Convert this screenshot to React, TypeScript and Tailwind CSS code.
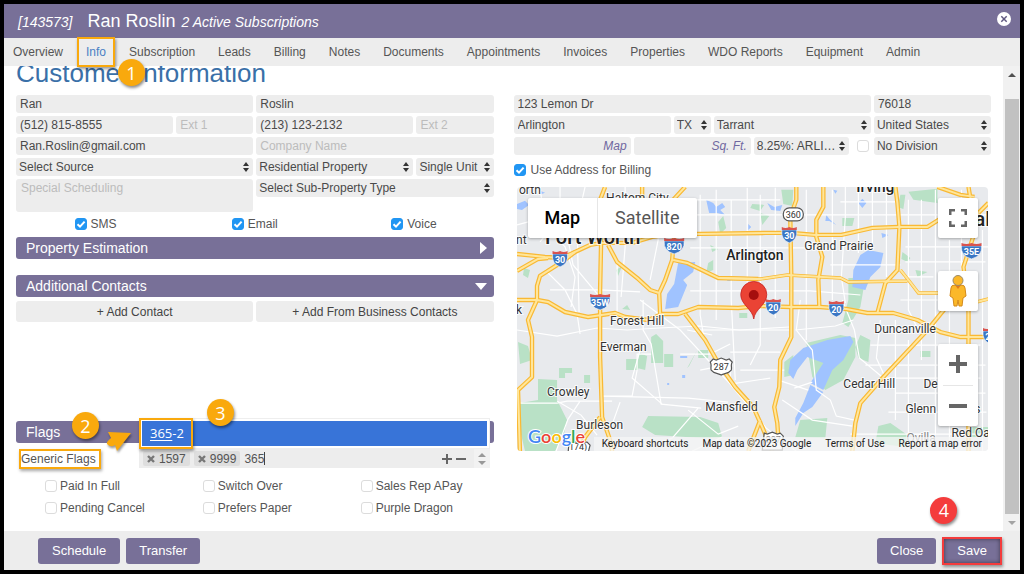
import type { ReactNode } from "react";
import clsx from "clsx";

const tabs = [
  "Overview", "Info", "Subscription", "Leads", "Billing", "Notes", "Documents",
  "Appointments", "Invoices", "Properties", "WDO Reports", "Equipment", "Admin",
];

const flags = ["Paid In Full", "Switch Over", "Sales Rep APay", "Pending Cancel", "Prefers Paper", "Purple Dragon"];

function Field({ label, value, className, unit }: { label: string; value?: string; className?: string; unit?: boolean }) {
  return (
    <input
      aria-label={label}
      placeholder={label}
      defaultValue={value}
      className={clsx(
        "h-[18px] w-full min-w-0 rounded-[3px] bg-[#ededed] px-1 text-xs text-[#4a4a4a]",
        unit ? "text-right italic placeholder:text-[#7068a0]" : "placeholder:text-[#bcbcbc]",
        className
      )}
    />
  );
}

function Picker({ label, value, className }: { label: string; value: string; className?: string }) {
  return (
    <div className={clsx("relative", className)}>
      <select aria-label={label} className="block h-[18px] w-full appearance-none truncate rounded-[3px] bg-[#ededed] pl-[3px] pr-3 text-xs text-[#4a4a4a]">
        <option>{value}</option>
      </select>
      <svg viewBox="0 0 6 10" className="pointer-events-none absolute right-1 top-1 h-[10px] w-[6px]" fill="#333">
        <path d="M3 0 6 4H0zM0 6h6L3 10z" />
      </svg>
    </div>
  );
}

function Tick({ checked, label }: { checked?: boolean; label?: string }) {
  return (
    <span className="relative block size-3 shrink-0">
      <input
        type="checkbox"
        defaultChecked={checked}
        aria-label={label}
        className="peer block size-3 appearance-none rounded-[3px] border border-[#dcdcdc] bg-white checked:border-[#2196f3] checked:bg-[#2196f3]"
      />
      <svg viewBox="0 0 12 12" className="pointer-events-none absolute inset-0 hidden size-3 peer-checked:block" fill="none" stroke="#fff" strokeWidth="2">
        <path d="M2.5 6.2 5 8.6l4.6-5" />
      </svg>
    </span>
  );
}

function Bar({ title, children }: { title: string; children?: ReactNode }) {
  return (
    <h2 className="flex h-[22px] items-center justify-between rounded-[3px] bg-[#787098] pl-[10px] pr-[7px] text-sm text-white">
      {title}
      {children}
    </h2>
  );
}

function Callout({ n, className }: { n: number; className?: string }) {
  return (
    <span
      className={clsx(
        "absolute z-20 flex size-[27px] items-center justify-center rounded-full font-['Open_Sans',sans-serif] text-lg text-white shadow-[1px_2px_3px_rgba(0,0,0,0.45)]",
        className
      )}
    >
      {n}
    </span>
  );
}

function Interstate({ x, y, n }: { x: number; y: number; n: string }) {
  const w = n.length > 2 ? 20 : 15;
  return (
    <g transform={`translate(${x} ${y})`}>
      <path d={`M${-w / 2} -4Q${-w / 2 - 1} 6 0 9Q${w / 2 + 1} 6 ${w / 2} -4z`} fill="#3a76c4" stroke="#fff" strokeWidth="0.6" />
      <path d={`M${-w / 2} -7q${w / 4} 2 ${w / 2} 0q${w / 4} 2 ${w / 2} 0v3h${-w}z`} fill="#d9534f" />
      <text y="5" textAnchor="middle" fontSize="9" fontWeight="700" fill="#fff">{n}</text>
    </g>
  );
}

// main roads get drawn twice, a dark casing and a light centre
const highways = [
  "M517 254l28 3 17 1 13-6 15-7 12-2 30 0 20-6 21-3h27l65-1 26 0 24 2 26 0 31-7 26-1h15l14 0 16-10",
  "M517 271l21-12 10-1M575 252l-13 10-22 14-3 10v14l-9 20 4 17v40l-14 13 2 64",
  "M605 187l-5 13 1 43-1 47v67l2 60 8 23 2 11M600 417l-15 20-6 14",
  "M642 187v14M685 187l-13 14M608 245l9 17 20 16 13 12 9 3M674 237l-2 23-7 20-6 13 1 21",
  "M517 300l20 0 11 2 17 10 23 5 27-4 10 4 23 3 14-6h16l20-7 40 1 20-2 32 1 30 0 26 2 21 4 26 0 24 7 23 12 20 5h28",
  "M673 260l14 3 31 15 40 1M796 187v13l-6 17 1 60v60l-11 23-1 27-5 20 3 16 1 14",
  "M685 314l20 26 13 23 17 24 18 20 9 20 10 24M748 451l12-31",
  "M823 187v20l-7 13v17l6 20-4 23 1 27M895 187l2 16 2 24-2 43-12 13-8 30",
  "M945 308l-18 22-44 47-23 26-5 20-3 28M978 213l-4 20-11 34 5 43v33l0 108",
  "M937 187l23 8 14 2M968 187l3 18M988 203l-10 10",
];

const arterials = [
  "M718 278l42 1 27-4 53 3 8 4 59-1M900 270l8 10 10 13h20M976 302l12-3",
];

const streets = [
  "M517 225l30-8 30 4 23-6 30 3 44-4M540 187l5 40 20 20 10 30-4 30M560 187v30l-20 25M625 187v60l-4 50M655 200l3 40-8 40",
  "M517 330l40 6 40-8 30 2 32-2 40-2 40 4 50-3M545 270l20 20 12 24 3 20M550 290h50l40 2M565 225l8 40 25 30M617 262l0 50M585 187l-8 35 2 90",
  "M640 300l40 30 50 54 36 44 30 23M602 396h30l5-26v-16h14M602 396l86 2 40 4M643 300v30l8 14 10 60 40 4",
  "M517 403h40l10-2h45M557 401l24 14 16 20M580 401l-12 18-12 32M620 402l-10 28M640 350l-8 28 30 26M698 408l-26 30-30 10-30-4M722 437l-30 14M688 410l30 24 20-8",
  "M700 195v120l4 25M716 190v130M731 200v100l4 80M747 188v110M760 195v150l-10 20M775 188v130M690 215h300M690 248h130M690 291h120l50 4M700 330h90M730 352h50M740 370h44M806 190v150M690 200h90",
  "M832 190v110M845 187v30l-4 60 4 26M858 187v66M872 190v60M886 187v90M908 200v110l10 20M921 200v160M935 190v200M949 240v200M961 190v110M982 230v221M830 265h70M840 202h55M905 247h85M905 262h80M903 277h30M900 300h88",
  "M842 300l12 30 5 28 24 20M800 300l-4 30 16 20 4 40 14 10 6 16 18 4M794 388l18-6M795 330l40-4 18-6M880 320l-4 38 10 22M895 320v100M908 340v110M865 365h120M895 393h90M888 412h98M880 378h100M870 345h110M850 434h138M935 365v70",
  "M782 400l30 20 40 6M778 380l30 10M730 384l40-6M700 370l30-6v20M680 354h30l20-10M687 330l25 5",
];

function MapCanvas() {
  return (
    <svg viewBox="517 187 471 264" preserveAspectRatio="xMidYMid slice" className="block h-[264px] w-full bg-[#e8eaed]" fontFamily="Roboto, sans-serif">
      <g fill="#b9e1c6">
        <path d="M538 379l19 1v20l10 20-4 18-8 13h-30l-5-21v-27l18-3zM642 427l6-11 52 1 18 6 4 14-17 1-50-3z" />
        <path d="M651 337l5-3 7 7v22h-12zM664 354h9v13h-9zM626 359h12v11h-12zM639 353l8 3-2 14-8-2zM559 368h13v5h-7v5h-6zM584 375h6v8h-6zM698 350h10v8h-10zM739 313h8v5h-8zM697 350l-10 18 2-2M622 309l5-4 3 5z" />
        <path d="M806 343l34-8 15 3v19l-12 23-18 10-13-13zM784 362l9-7 0 20-9 2zM860 335l10 5-2 22-10-4-3-11zM848 278h17l-5 29-12 20-6-4 6-23z" />
        <path d="M800 420l27-2-2 20-30-1zM878 426l12-3 17 12v12l-32-4zM920 351h10v6h-10zM908 192l29-3v14l-24-3zM900 195l5 0-2 14-6-2zM842 218h12l-2 8h-10zM902 252l8 6-3 4-6-3zM915 270l12 2-10 5zM970 427h18v10h-18z" />
        <path d="M718 222l5-6 3 12-6 6zM710 245l8 4-6 3zM708 263l5-3 0 10-7 3zM752 204l12 1-4 6-10-3zM781 190l12 0-1 16-9-2zM760 213l9 3-7 9zM518 342l10 4 4 14-12 4zM524 268l6 2-2 8-5-3zM616 270l6-4-4 10zM548 222l14-2-6 10z" />
      </g>
      <g fill="#a0c3ff">
        <path d="M790 360l13-12 24-8 23-4 3 6-10 18-11 10-9 20-13-7 13-20-16-6-10 13-4 9-5-6zM810 385l13 7-11 15-9 6-8 13v-8l8-15z" />
        <path d="M860 255l8-5 15 3-3 14-10 10-5 13-13-3 1-17zM678 263l17-1-2 10-10 8 4 5-9 22-13 2 2-15 7-10z" />
        <path d="M706 200l7 3 3 4 6-4 3 4-5 3 5 5-8-2-8 0-1-4zM517 204l8-3 4 4-7 5-5-1zM767 203l7 4 8-2-2 6-9-1zM826 215l3 4 7 6-7-4-4 0zM858 203l4-4 4 4-4 5zM833 190l4 1-2 3zM748 224l3 3-3 3zM881 233l7 2-6 3zM727 279h5v2h-5zM680 356h7v2h-7zM682 375h3v3h-3zM667 383h2v2h-2zM540 191l5 2-5 2z" />
      </g>
      <g fill="none" stroke="#fff" strokeWidth="1.2">
        {streets.map((d) => <path key={d} d={d} />)}
      </g>
      <g fill="none" stroke="#f9b934" strokeWidth="4.4" strokeLinejoin="round">
        {highways.map((d) => <path key={d} d={d} />)}
      </g>
      <g fill="none" stroke="#f9b934" strokeWidth="3.4">
        {arterials.map((d) => <path key={d} d={d} />)}
      </g>
      <g fill="none" stroke="#ffe69b" strokeWidth="2" strokeLinejoin="round">
        {[...highways, ...arterials].map((d) => <path key={d} d={d} />)}
      </g>
      <g fill="#333" fontSize="12" stroke="#fff" strokeWidth="2" strokeOpacity="0.8" paintOrder="stroke">
        <text x="519" y="194">orth</text>
        <text x="606" y="202">Haltom City</text>
        <text x="516" y="244">nt</text>
        <text x="516" y="314">k</text>
        <text x="804" y="250">Grand Prairie</text>
        <text x="610" y="325">Forest Hill</text>
        <text x="600" y="351">Everman</text>
        <text x="547" y="396">Crowley</text>
        <text x="576" y="429">Burleson</text>
        <text x="705" y="411">Mansfield</text>
        <text x="874" y="333">Duncanville</text>
        <text x="843" y="388">Cedar Hill</text>
        <text x="923" y="388">De Soto</text>
        <text x="905" y="413">Glenn Heights</text>
        <text x="906" y="442" fill="#888">Ovilla</text>
        <text x="951" y="437">Red Oak</text>
        <g fill="#222" fontWeight="500">
          <text x="545" y="244" fontSize="20">Fort Worth</text>
          <text x="726" y="260" fontSize="14">Arlington</text>
          <text x="856" y="192" fontSize="15">Irving</text>
          <text x="961" y="226" fontSize="20">Dallas</text>
        </g>
      </g>
      <Interstate x={560} y={258} n="30" />
      <Interstate x={674} y={245} n="820" />
      <Interstate x={789} y={234} n="30" />
      <Interstate x={600} y={301} n="35W" />
      <Interstate x={773} y={306} n="20" />
      <Interstate x={836} y={308} n="20" />
      <Interstate x={971} y={250} n="35E" />
      <Interstate x={990} y={335} n="20" />
      <g fill="#fff" stroke="#555" strokeWidth="1.2">
        <rect x="783" y="208" width="20" height="13" rx="6" />
        <path d="M713 359l3 1 5-2 5 2 3-1 3 3c-2 3 0 5-1 8-3 4-7 3-10 5-3-2-7-1-10-5-1-3 1-5-1-8zM764 433l3 1 5-2 5 2 3-1 3 3-1 14h-20z" />
        <path d="M569 442h18l3 3-2 8h-20z" />
      </g>
      <g fill="#333" fontSize="9" textAnchor="middle">
        <text x="793" y="218">360</text>
        <text x="721" y="370">287</text>
        <text x="773" y="443" fill="#888">287</text>
        <text x="578" y="450">174)</text>
      </g>
      <path d="M753.500 319c-1-10-13-14-13-24.500a13 13 0 0 1 26 0c0 10.500-12 14.500-13 24.500z" fill="#ea4335" stroke="#c5221f" strokeWidth="0.8" />
      <circle cx="753.500" cy="295" r="5" fill="#a50e0e" />
      <text x="528" y="443" fontFamily="Lato, sans-serif" fontSize="18" fontWeight="600" stroke="#fff" strokeWidth="2" paintOrder="stroke">
        <tspan fill="#4285f4">G</tspan>
        <tspan fill="#ea4335">o</tspan>
        <tspan fill="#fbbc05">o</tspan>
        <tspan fill="#4285f4">g</tspan>
        <tspan fill="#34a853">l</tspan>
        <tspan fill="#ea4335">e</tspan>
      </text>
    </svg>
  );
}

function MapPanel() {
  return (
    <div className="relative mx-[3px] mt-2 overflow-hidden rounded-[4px] font-[Roboto,sans-serif]">
      <MapCanvas />
      <div className="absolute left-[11px] top-[11px] flex h-10 rounded-[2px] bg-white text-lg shadow-[0_1px_3px_rgba(0,0,0,0.3)]">
        <button className="border-r border-[#e6e6e6] px-[17px] font-medium text-black">Map</button>
        <button className="px-[17px] text-[#565656]">Satellite</button>
      </div>
      <button aria-label="Toggle fullscreen view" className="absolute right-[10px] top-[11px] flex size-10 items-center justify-center rounded-[2px] bg-white shadow-[0_1px_3px_rgba(0,0,0,0.3)]">
        <svg viewBox="0 0 18 18" className="size-[18px]" fill="#666">
          <path d="M0 0v6h2.500V2.500H6V0zm18 0h-6v2.500h3.500V6H18zm-2.500 15.500H12V18h6v-6h-2.500zM2.500 12H0v6h6v-2.500H2.500z" />
        </svg>
      </button>
      <button aria-label="Street View" className="absolute right-[10px] top-[84px] flex size-10 items-center justify-center rounded-[2px] bg-white shadow-[0_1px_3px_rgba(0,0,0,0.3)]">
        <svg viewBox="0 0 18 32" className="h-8 w-[18px]">
          <path d="M2 13q0-3 4-3h6q4 0 4 3l1 8-3 2-1 8h-3l-1-6-1 6H5L4 23l-3-2z" fill="#fbb829" stroke="#d48a1a" />
          <path d="M6 10h6l-3 4z" fill="#e07b1c" />
          <circle cx="9" cy="5.500" r="5" fill="#fbb829" stroke="#9a8a6a" />
        </svg>
      </button>
      <div className="absolute right-[10px] top-[157px] flex h-[82px] w-10 flex-col items-center rounded-[2px] bg-white shadow-[0_1px_3px_rgba(0,0,0,0.3)]">
        <button aria-label="Zoom in" className="flex w-full flex-1 items-center justify-center">
          <svg viewBox="0 0 18 18" className="size-[18px]" fill="#666"><path d="M7 0h4v7h7v4h-7v7H7v-7H0V7h7z" /></svg>
        </button>
        <span className="h-px w-[30px] bg-[#e6e6e6]" />
        <button aria-label="Zoom out" className="flex w-full flex-1 items-center justify-center">
          <svg viewBox="0 0 18 18" className="size-[18px]" fill="#666"><path d="M0 7h18v4H0z" /></svg>
        </button>
      </div>
      <div className="absolute bottom-0 right-0 flex h-[14px] items-center gap-[14px] bg-[#f5f5f5]/75 pl-2 pr-[6px] text-[10px] text-[#222]">
        <button>Keyboard shortcuts</button>
        <span>Map data ©2023 Google</span>
        <a href="#terms">Terms of Use</a>
        <a href="#report">Report a map error</a>
      </div>
    </div>
  );
}

function Chip({ id }: { id: string }) {
  return (
    <span className="flex h-[15px] items-center gap-1 rounded-[2px] bg-[#dedede] px-1">
      <button aria-label={`Remove ${id}`}>
        <svg viewBox="0 0 8 8" className="size-2" stroke="#777" strokeWidth="2.4"><path d="M1 1l6 6M7 1 1 7" /></svg>
      </button>
      {id}
    </span>
  );
}

function GenericFlags() {
  return (
    <div className="relative mt-[6px] flex h-[19px] items-center text-xs">
      <label htmlFor="generic-flags" className="ml-[3px] flex h-5 w-[82px] items-center whitespace-nowrap border-2 border-[#f9a90d] shadow-[1px_2px_3px_rgba(0,0,0,0.35)]">
        Generic Flags
      </label>
      <div className="absolute left-[123px] right-1 flex h-[19px] items-center gap-1 bg-[#ededed] pl-1">
        <Chip id="1597" />
        <Chip id="9999" />
        <span className="flex flex-1 items-center">
          <input id="generic-flags" defaultValue="365" className="w-5 text-xs" />
          <span className="h-[13px] w-px bg-[#444]" />
        </span>
        <button aria-label="Add flag">
          <svg viewBox="0 0 10 10" className="size-[10px]" fill="#666"><path d="M4 0h2v4h4v2H6v4H4V6H0V4h4z" /></svg>
        </button>
        <button aria-label="Remove flag">
          <svg viewBox="0 0 10 10" className="size-[10px]" fill="#666"><path d="M0 4h10v2H0z" /></svg>
        </button>
        <span className="ml-1 flex h-full w-4 items-center justify-center bg-[#f2f2f2]">
          <svg viewBox="0 0 8 12" className="h-3 w-2" fill="#999"><path d="M4 0l4 4H0zM0 8h8l-4 4z" /></svg>
        </span>
      </div>
      {/* suggestion list opens upward */}
      <div className="absolute bottom-full left-[123px] right-1 border border-[#eeeeee] bg-white p-[2px]">
        <a href="#365-2" className="flex h-[25px] items-center bg-[#3874d8] pl-2 font-['Open_Sans',sans-serif] text-[13px] text-white">
          <span className="underline decoration-1 underline-offset-2">365</span>-2
        </a>
        <span className="absolute -left-px -top-px h-[31px] w-[54px] border-2 border-[#f9a90d] shadow-[1px_2px_3px_rgba(0,0,0,0.4)]" />
        <Callout n={3} className="-top-5 left-[67px] bg-[#f9a90d]" />
      </div>
      <Callout n={2} className="-top-[37px] left-[56px] bg-[#f9a90d]" />
      <svg viewBox="0 0 26 22" className="absolute -top-[18px] left-[90px] h-[22px] w-[26px] drop-shadow-[1px_2px_1px_rgba(0,0,0,0.4)]" fill="#f9a90d">
        <path d="M2 1 25 2 11 20 9 14Q5 17 1 13 0 11 5 7z" />
      </svg>
    </div>
  );
}

export default function App() {
  return (
    <div className="h-screen bg-black p-1 font-['Liberation_Sans',Arial,sans-serif] text-xs text-[#555]">
      <div className="flex h-full flex-col overflow-hidden bg-white">
        <header className="flex h-[34px] shrink-0 items-center justify-between bg-[#787098] pl-[14px] pr-[9px] text-white">
          <h1 className="flex items-baseline text-sm italic">
            [143573]
            <span className="ml-[15px] mr-[6px] text-lg not-italic">Ran Roslin</span>
            2 Active Subscriptions
          </h1>
          <button aria-label="Close window" className="mb-1">
            <svg viewBox="0 0 14 14" className="size-[14px]">
              <circle cx="7" cy="7" r="7" fill="#fff" />
              <path d="M4.300 4.300l5.400 5.400M9.700 4.300 4.300 9.700" stroke="#5f5880" strokeWidth="1.500" />
            </svg>
          </button>
        </header>

        <nav className="relative z-10 flex h-7 shrink-0 items-center gap-[23px] bg-[#ededed] pl-[9px]">
          {tabs.map((tab) => (
            <a key={tab} href={`#${tab}`} className={clsx("relative whitespace-nowrap", tab === "Info" && "text-[#4a80c4]")}>
              {tab}
              {tab === "Info" && (
                <>
                  <span className="absolute -inset-x-[9px] -inset-y-[7px] border-2 border-[#f9a90d] shadow-[1px_2px_3px_rgba(0,0,0,0.4)]" />
                  <Callout n={1} className="left-8 top-[15px] bg-[#f9a90d]" />
                </>
              )}
            </a>
          ))}
        </nav>

        <main className="flex min-h-0 flex-1">
          <div className="grid flex-1 grid-cols-2 gap-5 overflow-hidden px-3">
            <section className="min-w-0">
              <h1 className="-mt-2 mb-[7px] whitespace-nowrap text-[26px] leading-[30px] text-[#3a70a8]">Customer Information</h1>
              <div className="grid grid-cols-12 items-start gap-[3px]">
                <Field label="First Name" value="Ran" className="col-span-6" />
                <Field label="Last Name" value="Roslin" className="col-span-6" />
                <Field label="Phone 1" value="(512) 815-8555" className="col-span-4" />
                <Field label="Ext 1" className="col-span-2" />
                <Field label="Phone 2" value="(213) 123-2132" className="col-span-4" />
                <Field label="Ext 2" className="col-span-2" />
                <Field label="Email Address" value="Ran.Roslin@gmail.com" className="col-span-6" />
                <Field label="Company Name" className="col-span-6" />
                <Picker label="Source" value="Select Source" className="col-span-6" />
                <Picker label="Property Type" value="Residential Property" className="col-span-4" />
                <Picker label="Units" value="Single Unit" className="col-span-2" />
                <textarea
                  aria-label="Special Scheduling"
                  placeholder="Special Scheduling"
                  className="col-span-6 block h-[33px] resize-none rounded-[3px] bg-[#ededed] px-[5px] pt-px text-xs placeholder:text-[#bcbcbc]"
                />
                <Picker label="Sub-Property Type" value="Select Sub-Property Type" className="col-span-6" />
              </div>

              <div className="mb-1 mt-[2px] grid h-[19px] grid-cols-3">
                {["SMS", "Email", "Voice"].map((name) => (
                  <label key={name} className="flex items-center justify-center gap-1">
                    <Tick checked />
                    {name}
                  </label>
                ))}
              </div>

              <Bar title="Property Estimation">
                <svg viewBox="0 0 7 12" className="h-3 w-[7px]" fill="#fff"><path d="M0 0l7 6-7 6z" /></svg>
              </Bar>
              <div className="mt-4">
                <Bar title="Additional Contacts">
                  <svg viewBox="0 0 12 7" className="h-[7px] w-3" fill="#fff"><path d="M0 0h12L6 7z" /></svg>
                </Bar>
              </div>
              <div className="mb-[99px] mt-1 grid grid-cols-2 gap-[3px] text-[#444]">
                <button className="h-[21px] rounded-[3px] bg-[#ededed]">+ Add Contact</button>
                <button className="h-[21px] rounded-[3px] bg-[#ededed]">+ Add From Business Contacts</button>
              </div>

              <Bar title="Flags" />
              <GenericFlags />
              <div className="mr-1 mt-[7px] grid grid-cols-3">
                {flags.map((flag) => (
                  <label key={flag} className="flex h-[22px] items-center gap-[3px] whitespace-nowrap pl-[29px]">
                    <Tick />
                    {flag}
                  </label>
                ))}
              </div>
            </section>

            <section className="min-w-0 pt-[29px]">
              <div className="grid grid-cols-12 gap-[3px]">
                <Field label="Street" value="123 Lemon Dr" className="col-span-9" />
                <Field label="Zip" value="76018" className="col-span-3" />
                <Field label="City" value="Arlington" className="col-span-4" />
                <Picker label="State" value="TX" className="col-span-1" />
                <Picker label="County" value="Tarrant" className="col-span-4" />
                <Picker label="Country" value="United States" className="col-span-3" />
                <Field label="Map" unit className="col-span-3" />
                <Field label="Sq. Ft." unit className="col-span-3" />
                <div className="col-span-3 flex items-center gap-2 pr-[2px]">
                  <Picker label="Tax Rate" value="8.25%: ARLI…" className="min-w-0 flex-1" />
                  <Tick label="Tax exempt" />
                </div>
                <Picker label="Division" value="No Division" className="col-span-3" />
              </div>
              <label className="mt-[6px] flex h-[18px] items-center gap-[5px]">
                <Tick checked />
                Use Address for Billing
              </label>
              <MapPanel />
            </section>
          </div>

          <div className="flex w-[17px] shrink-0 flex-col items-center bg-[#f1f1f1]">
            <svg viewBox="0 0 8 4" className="my-[7px] h-1 w-2 shrink-0" fill="#505050"><path d="M4 0l4 4H0z" /></svg>
            <div className="mb-px mt-[15px] w-[14px] flex-1 bg-[#c1c1c1]" />
            <svg viewBox="0 0 8 4" className="my-[6px] h-1 w-2 shrink-0" fill="#a3a3a3"><path d="M0 0h8L4 4z" /></svg>
          </div>
        </main>

        <footer className="relative z-10 flex h-[39px] shrink-0 items-center gap-[6px] bg-[#ededed] pl-[34px] pr-[18px] text-[13px] text-white">
          <button className="h-[26px] rounded-[3px] bg-[#787098] px-[14px]">Schedule</button>
          <button className="h-[26px] rounded-[3px] bg-[#787098] px-[13px]">Transfer</button>
          <button className="ml-auto h-[26px] rounded-[3px] bg-[#787098] px-[13px]">Close</button>
          <div className="relative">
            <button className="h-[28px] border-2 border-[#f43c3c] bg-[#787098] px-[13px] shadow-[1px_2px_3px_rgba(0,0,0,0.4),inset_0_0_4px_rgba(0,0,0,0.5)]">Save</button>
            <Callout n={4} className="-left-3 -top-10 bg-[#f43c3c]" />
          </div>
        </footer>
      </div>
    </div>
  );
}
